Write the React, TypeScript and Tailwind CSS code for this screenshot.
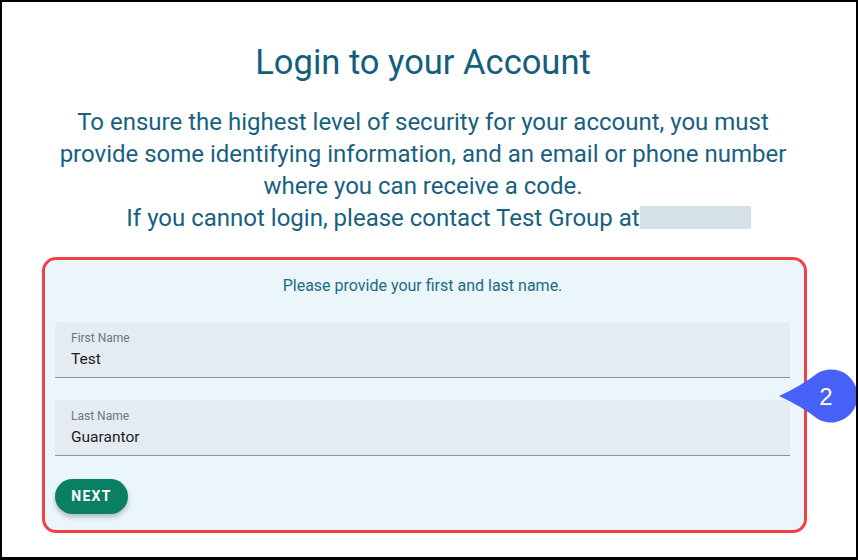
import type { ReactNode } from "react";

const font = { fontFamily: "Roboto, 'Liberation Sans', Arial, sans-serif" };

function Field(props: { label: string; value: string }) {
  return (
    <div className="flex flex-col rounded-t-[4px] border-b border-[#8b9599] bg-[#e4ecf2] pt-2 pb-2 pl-4">
      <span className="text-[12px] leading-4 text-[#6b7780]">{props.label}</span>
      <span className="mt-[3px] text-[15.5px] leading-5 text-[#1c1c1c]">{props.value}</span>
    </div>
  );
}

function Panel(props: { children: ReactNode }) {
  return (
    <div className="ml-[3px] rounded-[14px] border-[3px] border-[#ef4247] bg-[#ebf6fb] pl-[10px] pr-[14px] pt-4 pb-4">
      {props.children}
    </div>
  );
}

// annotation marker on the right edge
function Marker() {
  return (
    <svg
      className="absolute left-[777px] top-[367px]"
      width="80"
      height="54"
      viewBox="0 0 80 54"
    >
      <path
        d="M0 27 Q22 17 38.5 4.2 A26.5 26.5 0 1 1 38.5 49.8 Q22 37 0 27 Z"
        fill="#4661f5"
      />
      <text
        x="47"
        y="36"
        textAnchor="middle"
        fill="#ffffff"
        fontSize="24"
        fontFamily="'Liberation Sans', Arial, sans-serif"
      >
        2
      </text>
    </svg>
  );
}

export default function App() {
  return (
    <div
      className="relative h-[560px] w-[858px] overflow-hidden border-2 border-b-[3px] border-black bg-white"
      style={font}
    >
      <div className="flex flex-col pt-10 pl-[37px] pr-[49px]">
        <h1 className="text-center text-[34.5px] leading-10 text-[#135e7b]">
          Login to your Account
        </h1>
        <p className="mt-6 whitespace-nowrap text-center text-[24px] leading-8 text-[#176180]">
          To ensure the highest level of security for your account, you must
          <br />
          provide some identifying information, and an email or phone number
          <br />
          where you can receive a code.
          <br />
          If you cannot login, please contact Test Group at
          <span className="-mr-[31px] inline-block h-[23px] w-[111px] translate-y-[3px] bg-[#d4e1e8]" />
        </p>

        <div className="mt-[23px]">
          <Panel>
            <p className="text-center text-[16px] leading-5 text-[#216a86]">
              Please provide your first and last name.
            </p>
            <div className="mt-[26px] flex flex-col gap-[22px]">
              <Field label="First Name" value="Test" />
              <Field label="Last Name" value="Guarantor" />
            </div>
            <div className="mt-[23px]">
              <button className="h-[35px] w-[73px] rounded-full bg-[#0a7f64] text-[14px] font-bold tracking-[1.25px] text-white shadow-[0_3px_5px_rgba(0,0,0,0.25)]">
                NEXT
              </button>
            </div>
          </Panel>
        </div>
      </div>
      <Marker />
    </div>
  );
}
